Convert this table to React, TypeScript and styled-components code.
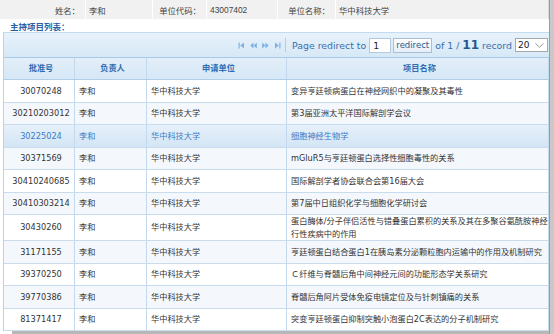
import styled, { createGlobalStyle } from 'styled-components';

type Project = {
	code: string;
	leader: string;
	unit: string;
	title: string;
	tall?: boolean;
};

const PROJECTS: Project[] = [
	{ code: '30070248', leader: '李和', unit: '华中科技大学', title: '变异亨廷顿病蛋白在神经网织中的凝聚及其毒性' },
	{ code: '30210203012', leader: '李和', unit: '华中科技大学', title: '第3届亚洲太平洋国际解剖学会议' },
	{ code: '30225024', leader: '李和', unit: '华中科技大学', title: '细胞神经生物学' },
	{ code: '30371569', leader: '李和', unit: '华中科技大学', title: 'mGluR5与亨廷顿蛋白选择性细胞毒性的关系' },
	{ code: '30410240685', leader: '李和', unit: '华中科技大学', title: '国际解剖学者协会联合会第16届大会' },
	{ code: '30410303214', leader: '李和', unit: '华中科技大学', title: '第7届中日组织化学与细胞化学研讨会' },
	{ code: '30430260', leader: '李和', unit: '华中科技大学', title: '蛋白酶体/分子伴侣活性与错叠蛋白累积的关系及其在多聚谷氨酰胺神经行性疾病中的作用', tall: true },
	{ code: '31171155', leader: '李和', unit: '华中科技大学', title: '亨廷顿蛋白结合蛋白1在胰岛素分泌颗粒胞内运输中的作用及机制研究' },
	{ code: '39370250', leader: '李和', unit: '华中科技大学', title: 'Ｃ纤维与脊髓后角中间神经元间的功能形态学关系研究' },
	{ code: '39770386', leader: '李和', unit: '华中科技大学', title: '脊髓后角阿片受体免疫电镜定位及与针刺镇痛的关系' },
	{ code: '81371417', leader: '李和', unit: '华中科技大学', title: '突变亨廷顿蛋白抑制突触小泡蛋白2C表达的分子机制研究' }
];

const SELECTED = 2;

const GlobalStyle = createGlobalStyle`
	html, body {
		margin: 0;
		padding: 0;
		background: #fff;
		overflow: hidden;
	}
	body {
		font-family: 'DejaVu Sans', 'Noto Sans CJK SC', sans-serif;
		font-size: 8.2px;
		color: #333;
	}
`;

const Page = styled.div`
	width: 554px;
	height: 334px;
	display: flex;
	overflow: hidden;
`;

const Main = styled.div`
	width: 549px;
	display: flex;
	flex-direction: column;
`;

const VScroll = styled.div`
	width: 5px;
	background: #c9c9c9;
	border-left: 1px solid #9c9c9c;
	box-sizing: border-box;
`;

const InfoBar = styled.div`
	height: 20px;
	display: grid;
	grid-template-columns: 85px 66px 53px 70px 57px 1fr;
	gap: 1px;
	background: #fff;
	border-right: 1px solid #d8d8d8;
	font-family: 'Liberation Sans', 'Noto Sans CJK SC', sans-serif;
	font-size: 8.4px;
	color: #444;
`;

const InfoCell = styled.div<{ $label?: boolean }>`
	background: #f1f1f1;
	display: flex;
	align-items: center;
	justify-content: ${p => (p.$label ? 'flex-end' : 'flex-start')};
	padding: ${p => (p.$label ? '0 5px 0 0' : '0 0 0 3px')};
`;

const SectionTitle = styled.div`
	height: 13px;
	padding-left: 10px;
	display: flex;
	align-items: center;
	font-family: 'Noto Sans CJK SC', sans-serif;
	font-weight: bold;
	font-size: 8.5px;
	color: #2a5fa6;
`;

const Grid = styled.div`
	margin-left: 3px;
	display: flex;
	flex-direction: column;
	border-left: 1px solid #b7d2ec;
`;

const Pager = styled.div`
	height: 25px;
	box-sizing: border-box;
	border-top: 1px solid #c4dbef;
	background: linear-gradient(#e7f2fb, #d7e8f6);
	display: flex;
	align-items: center;
	justify-content: flex-end;
	padding-right: 1px;
	color: #3a6fa9;
	font-size: 9.4px;
	white-space: nowrap;
`;

const PagerIcons = styled.div`
	display: flex;
	align-items: center;
	gap: 5px;
	padding-right: 4px;
	margin-right: 3px;
	border-right: 1px solid #b4cde4;
	height: 14px;
`;

const PagerText = styled.span`
	margin: 0 3px;
`;

const PageInput = styled.div`
	width: 22px;
	height: 15px;
	box-sizing: border-box;
	border: 1px solid #b3c9de;
	background: #fff;
	color: #222;
	display: flex;
	align-items: center;
	padding-left: 3px;
`;

const RedirectButton = styled.div`
	width: 39px;
	height: 15px;
	box-sizing: border-box;
	margin-left: 2px;
	border: 1px solid #a9bfd6;
	background: linear-gradient(#fdfeff, #e6eef6);
	color: #2c5a8e;
	display: flex;
	align-items: center;
	justify-content: center;
	font-size: 8.5px;
`;

const Total = styled.b`
	font-size: 12px;
	color: #23578f;
`;

const PageSize = styled.div`
	width: 33px;
	height: 14px;
	box-sizing: border-box;
	border: 1px solid #a8a8a8;
	background: #fff;
	color: #222;
	display: flex;
	align-items: center;
	justify-content: space-between;
	padding: 0 3px 0 2px;
	font-size: 9px;
`;

const Row = styled.div<{ $height: number; $tone: 'head' | 'plain' | 'alt' | 'selected' }>`
	height: ${p => p.$height}px;
	box-sizing: border-box;
	display: grid;
	grid-template-columns: 71px 72px 140px 1fr;
	border-bottom: 1px solid ${p => (p.$tone === 'head' ? '#b0cde9' : '#c9dcee')};
	border-top: ${p => (p.$tone === 'head' ? '1px solid #a9c9e7' : 'none')};
	background: ${p =>
		p.$tone === 'head'
			? 'linear-gradient(#e3eff9, #d6e7f6)'
			: p.$tone === 'selected'
			? 'linear-gradient(#e6f0fa, #d3e5f5)'
			: p.$tone === 'alt'
			? '#f4f8fd'
			: '#fff'};
	color: ${p => (p.$tone === 'selected' ? '#3b7cc6' : p.$tone === 'head' ? '#2e6db4' : '#333')};
	font-weight: ${p => (p.$tone === 'head' ? 'bold' : 'normal')};
`;

const Cell = styled.div<{ $center?: boolean }>`
	border-right: 1px solid #c3d8ed;
	display: flex;
	align-items: center;
	justify-content: ${p => (p.$center ? 'center' : 'flex-start')};
	text-align: ${p => (p.$center ? 'center' : 'left')};
	padding: 0 0 0 4px;
	line-height: 12.5px;
	overflow: hidden;
`;

const HScroll = styled.div`
	height: 3px;
	margin-left: 12px;
	background: #b8b8b8;
	margin-top: auto;
`;

const Icon = ({ kind }: { kind: 'first' | 'prev' | 'next' | 'last' }) => {
	const c = '#7db2e2';
	return (
		<svg width='7' height='7' viewBox='0 0 7 7'>
			{kind === 'first' && (
				<>
					<rect x='0.5' y='0.5' width='1.2' height='6' fill={c} />
					<path d='M6 0.5 L2.2 3.5 L6 6.5 Z' fill={c} />
				</>
			)}
			{kind === 'prev' && (
				<>
					<path d='M3.5 0.5 L0.3 3.5 L3.5 6.5 Z' fill={c} />
					<path d='M6.8 0.5 L3.6 3.5 L6.8 6.5 Z' fill={c} />
				</>
			)}
			{kind === 'next' && (
				<>
					<path d='M0.2 0.5 L3.4 3.5 L0.2 6.5 Z' fill={c} />
					<path d='M3.5 0.5 L6.7 3.5 L3.5 6.5 Z' fill={c} />
				</>
			)}
			{kind === 'last' && (
				<>
					<path d='M1 0.5 L4.8 3.5 L1 6.5 Z' fill={c} />
					<rect x='5.3' y='0.5' width='1.2' height='6' fill={c} />
				</>
			)}
		</svg>
	);
};

const Chevron = () => (
	<svg width='9' height='5' viewBox='0 0 9 5'>
		<path d='M0.5 0.5 L4.5 4.2 L8.5 0.5' fill='none' stroke='#888' strokeWidth='0.9' />
	</svg>
);

const rowTone = (i: number) => (i === SELECTED ? 'selected' : i % 2 === 1 ? 'alt' : 'plain');

export default function App() {
	return (
		<Page>
			<GlobalStyle />
			<Main>
				<InfoBar>
					<InfoCell $label>姓名：</InfoCell>
					<InfoCell>李和</InfoCell>
					<InfoCell $label>单位代码：</InfoCell>
					<InfoCell>43007402</InfoCell>
					<InfoCell $label>单位名称：</InfoCell>
					<InfoCell>华中科技大学</InfoCell>
				</InfoBar>
				<SectionTitle>主持项目列表：</SectionTitle>
				<Grid>
					<Pager>
						<PagerIcons>
							<Icon kind='first' />
							<Icon kind='prev' />
							<Icon kind='next' />
							<Icon kind='last' />
						</PagerIcons>
						<PagerText>Page redirect to</PagerText>
						<PageInput>1</PageInput>
						<RedirectButton>redirect</RedirectButton>
						<PagerText>
							of 1 / <Total>11</Total> record
						</PagerText>
						<PageSize>
							20 <Chevron />
						</PageSize>
					</Pager>
					<Row $height={23} $tone='head'>
						<Cell $center>批准号</Cell>
						<Cell $center>负责人</Cell>
						<Cell $center>申请单位</Cell>
						<Cell $center>项目名称</Cell>
					</Row>
					{PROJECTS.map((p, i) => (
						<Row key={p.code} $height={p.tall ? 26 : 22.5} $tone={rowTone(i)}>
							<Cell $center>{p.code}</Cell>
							<Cell>{p.leader}</Cell>
							<Cell>{p.unit}</Cell>
							<Cell>{p.title}</Cell>
						</Row>
					))}
				</Grid>
				<HScroll />
			</Main>
			<VScroll />
		</Page>
	);
}
